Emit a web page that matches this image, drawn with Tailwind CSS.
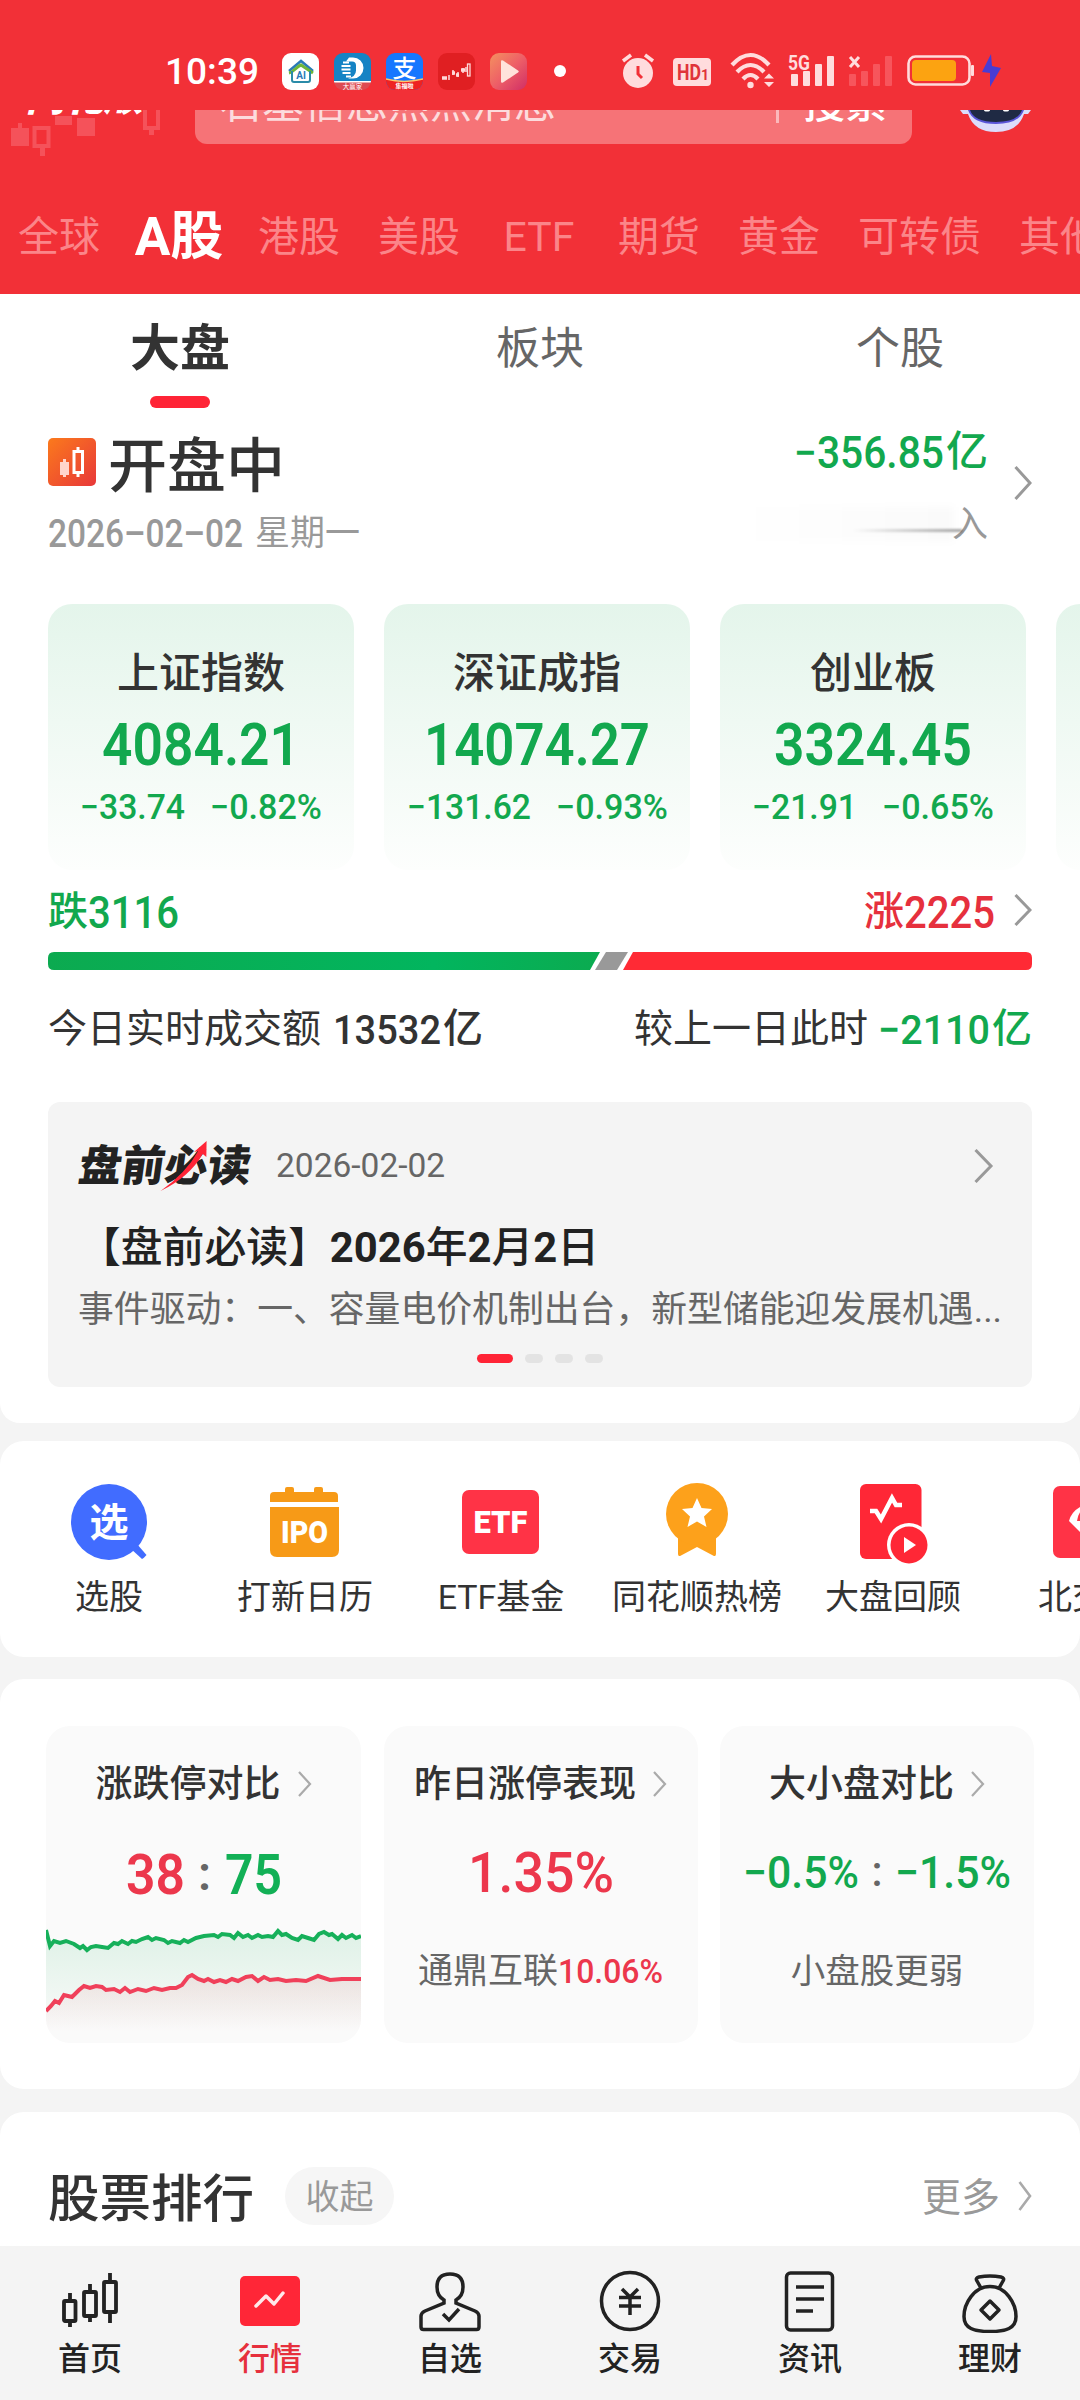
<!DOCTYPE html>
<html lang="zh-CN">
<head>
<meta charset="utf-8">
<title>行情</title>
<script src="https://cdn.jsdelivr.net/npm/@tailwindcss/browser@4"></script>
</head>
<body class="w-[1080px] h-[2400px] overflow-hidden bg-[#f4f4f4] text-[#333] font-['Roboto','Noto_Sans_CJK_SC',sans-serif] flex flex-col whitespace-nowrap">

<!-- status bar -->
<header class="h-[294px] shrink-0 bg-[#f23037] flex flex-col">
  <div class="h-[110px] shrink-0 flex items-center pt-[32px] pl-[165px] relative">
    <svg class="w-[94px] h-[1em] text-[37px] font-medium fill-white overflow-visible"><text y=".845em" textLength="94" lengthAdjust="spacingAndGlyphs">10:39</text></svg>
    <div class="flex gap-[15px] ml-[23px]">
      <svg class="w-[37px] h-[37px]" viewBox="0 0 37 37"><rect width="37" height="37" rx="9" fill="#fff"/><path d="M7 18L19 8l12 10" fill="none" stroke="#2a7ab8" stroke-width="2.5"/><path d="M7 20c5-1 7-6 12-8l12 8" fill="none" stroke="#6db63a" stroke-width="3"/><path d="M10 18v9q0 2 2 2h14q2 0 2-2v-9" fill="none" stroke="#2a8ba8" stroke-width="2"/><text x="19" y="26" font-size="10" font-weight="700" text-anchor="middle" fill="#2a7ab8">AI</text></svg>
      <svg class="w-[37px] h-[37px]" viewBox="0 0 37 37"><defs><clipPath id="r"><rect width="37" height="37" rx="9"/></clipPath></defs><g clip-path="url(#r)"><rect width="37" height="30" fill="#1583c4"/><rect y="29" width="37" height="8" fill="#dd4a52"/><rect y="28" width="37" height="1.5" fill="#fff"/><path d="M15 4.500h4a10.500 10.500 0 0 1 0 21h-5q8-2 8-8v-5q0-4-4-4h-6z" fill="#fff"/><path d="M9 9.500h6M7.500 13h9M7.500 16.500h9M8.500 20h8M12 23.500h5" stroke="#fff" stroke-width="1.900"/><text x="18.500" y="35.500" font-size="6.500" text-anchor="middle" fill="#fff">大赢家</text></g></svg>
      <svg class="w-[37px] h-[37px]" viewBox="0 0 37 37"><g clip-path="url(#r)"><rect width="37" height="37" fill="#1677ff"/><path d="M0 26q18 5 37 0v11H0z" fill="#ee2222"/><path d="M0 26q18 5 37 0" stroke="#ffc46b" stroke-width="1.500" fill="none"/><text x="18.500" y="23.500" font-size="24" font-weight="500" text-anchor="middle" fill="#fff">支</text><text x="18.500" y="35" font-size="6" font-weight="700" text-anchor="middle" fill="#fff">集福啦</text></g></svg>
      <svg class="w-[37px] h-[37px]" viewBox="0 0 37 37"><rect width="37" height="37" rx="9" fill="#e01f22"/><path d="M4 25h5M14 20h3M18 22h3M23 17h4" stroke="#ffdada" stroke-width="3.500"/><path d="M11 22v5M15 17v5M20 19v5M25 15v5M28 14v5" stroke="#ffdada" stroke-width="1.500"/><rect x="29.500" y="11" width="2.500" height="12" fill="none" stroke="#ffdada" stroke-width="1.300"/></svg>
      <svg class="w-[37px] h-[37px]" viewBox="0 0 37 37"><defs><linearGradient id="pl" x1="0" y1="0" x2="1" y2="1"><stop offset="0" stop-color="#f4915f"/><stop offset=".5" stop-color="#ee5f67"/><stop offset="1" stop-color="#d02e66"/></linearGradient></defs><rect width="37" height="37" rx="9" fill="url(#pl)"/><path d="M11 8.500v20q0 2 2 1l15-10q1.500-1 0-2L13 7.500q-2-1-2 1z" fill="#ffe3dc"/></svg>
    </div>
    <div class="w-3 h-3 rounded-full bg-white ml-[27px]"></div>
    <svg class="absolute left-[620px] top-[50px] w-[384px] h-[42px]" viewBox="620 50 384 42" fill="#ffdcdd">
      <circle cx="638" cy="73" r="15"/><path d="M623 61l8-6M653 61l-8-6" stroke="#ffdcdd" stroke-width="3.500"/><path d="M638 66v8l4 4" stroke="#f23037" stroke-width="3" fill="none"/>
      <rect x="673" y="58" width="38" height="28" rx="4"/><text x="689" y="80" font-size="22" font-weight="700" text-anchor="middle" fill="#e0333a" textLength="24" lengthAdjust="spacingAndGlyphs">HD</text><text x="705" y="80" font-size="14" font-weight="700" text-anchor="middle" fill="#e0333a">1</text>
      <g fill="none" stroke="#ffdcdd" stroke-width="4.200"><path d="M732 65q18.500-20 37 0"/><path d="M737 72q13.500-14 27 0"/><path d="M743 79q7.500-8 15 0"/></g><circle cx="750.500" cy="85" r="3.200"/><path d="M764 78.500l5-5 5 5zM764 82l5 5 5-5z"/>
      <text x="788" y="70" font-size="20" font-weight="700" textLength="22" lengthAdjust="spacingAndGlyphs">5G</text>
      <rect x="791" y="74" width="7" height="12" rx="1"/><rect x="803" y="71" width="7" height="15" rx="1"/><rect x="815" y="64" width="7" height="22" rx="1"/><rect x="827" y="56" width="7" height="30" rx="1"/>
      <path d="M850 57l9 10M859 57l-9 10" stroke="#ffdcdd" stroke-width="3"/>
      <g fill="#f7555c"><rect x="849" y="74" width="7" height="12" rx="1"/><rect x="861" y="71" width="7" height="15" rx="1"/><rect x="873" y="64" width="7" height="22" rx="1"/><rect x="885" y="56" width="7" height="30" rx="1"/></g>
      <rect x="908.500" y="56.500" width="61" height="28" rx="7" fill="none" stroke="#ffdcdd" stroke-width="2.600"/><rect x="912" y="60" width="44" height="21" rx="4" fill="#fca311"/><rect x="971" y="65" width="3" height="11" rx="1"/>
      <path d="M991 54l-9 18 8 1v14l11-19-9-2z" fill="#4a3cd2"/>
    </svg>
  </div>
  <!-- partly scrolled search row -->
  <div class="h-[50px] shrink-0 overflow-hidden relative">
    <svg class="absolute left-0 top-0 w-[180px] h-[50px]" viewBox="0 0 180 50"><g fill="#f5525a"><rect x="11" y="18" width="18" height="18"/><rect x="18" y="13" width="4" height="6"/><rect x="55" y="6" width="17" height="9"/><rect x="77" y="8" width="18" height="18"/><rect x="40" y="38" width="5" height="8"/><rect x="149" y="18" width="5" height="7"/></g><g fill="none" stroke="#f5525a" stroke-width="4"><rect x="34.500" y="18" width="14" height="18"/><rect x="145" y="-4" width="13" height="22"/></g></svg>
    <div class="absolute left-[26px] -top-[33px] text-[39px] leading-[42px] font-black italic text-white">同花顺</div>
    <div class="absolute left-[195px] -top-[46px] w-[717px] h-[80px] rounded-[12px] bg-[#f67377] flex items-center pl-[25px] text-[42px] leading-none text-white/75">
      <span>石基信息热点消息</span><span class="w-[3px] h-[38px] bg-white/50 ml-[220px] mr-[24px]"></span><span class="text-white font-medium">搜索</span>
    </div>
    <svg class="absolute left-[955px] top-0 w-[80px] h-[24px]" viewBox="0 0 80 24"><path d="M5 0h71l-3 4h-4q-6 18-28 18T13 4H8z" fill="#dcdcfb"/><path d="M13 0h56q-5 14-28 14T13 0z" fill="#5a55d8"/><path d="M15 0h52q-4 12-26 12T15 0z" fill="#1f2a44"/><ellipse cx="32" cy="0" rx="3" ry="1.500" fill="#fff"/><ellipse cx="51" cy="0" rx="3" ry="1.500" fill="#fff"/></svg>
  </div>
  <nav class="h-[154px] shrink-0 pl-[18px] flex gap-[38px] items-center overflow-hidden text-[41px] leading-none text-[#fb8589] [&>span]:shrink-0">
    <span class="w-[82px]">全球</span><span class="w-[82px] text-[53px] leading-none font-bold text-white flex justify-center">A股</span><span class="w-[82px]">港股</span><span class="w-[82px]">美股</span><span class="w-[82px] text-center">ETF</span><span class="w-[82px]">期货</span><span class="w-[82px]">黄金</span><span class="w-[123px]">可转债</span><span>其他</span>
  </nav>
</header>

<main class="h-[1952px] shrink-0 overflow-hidden flex flex-col">
<section class="h-[1129px] shrink-0 bg-white rounded-b-[20px] flex flex-col">
  <div class="grid grid-cols-3 h-[114px] text-center text-[44px] leading-none text-[#666]">
    <div class="flex flex-col items-center pt-[30px] text-[50px] text-[#333] font-bold"><span>大盘</span><i class="w-[60px] h-3 rounded-full bg-[#ff2436] mt-[22px]"></i></div>
    <div class="pt-[33px]">板块</div><div class="pt-[33px]">个股</div>
  </div>
  <div class="h-[196px] shrink-0 px-12 flex justify-between">
    <div class="pt-[28px] flex flex-col">
      <div class="flex items-center gap-[12px] h-[60px]">
        <svg class="w-12 h-12 -mt-[9px]" viewBox="0 0 48 48"><defs><linearGradient id="kp" x1="0" y1="0" x2="1" y2="1"><stop stop-color="#fb7a1c"/><stop offset="1" stop-color="#e8383a"/></linearGradient></defs><rect width="48" height="48" rx="5" fill="url(#kp)"/><rect x="12" y="24" width="9" height="13" fill="#ffd5cc"/><path d="M16.500 21v18" stroke="#ffd5cc" stroke-width="3"/><rect x="26" y="13.500" width="8.500" height="21" fill="none" stroke="#fff" stroke-width="3"/><path d="M30 9v4M30 35v4" stroke="#fff" stroke-width="3"/></svg>
        <span class="text-[59px] leading-none font-medium">开盘中</span>
      </div>
      <div class="flex items-center h-[40px] mt-[17px] text-[35px] leading-none text-[#999]"><svg class="w-[195px] h-[1em] text-[38px] font-medium fill-current overflow-visible"><text y=".855em" textLength="195" lengthAdjust="spacingAndGlyphs">2026–02–02</text></svg><span class="ml-[12px]">星期一</span></div>
    </div>
    <div class="flex items-start gap-[26px]">
      <div class="flex flex-col items-end pt-[22px]">
        <div class="flex items-center h-[44px] text-[42px] leading-none font-medium text-[#12a84e]"><svg class="w-[150px] h-[1em] text-[44px] fill-current overflow-visible mr-[2px]"><text y=".855em" textLength="150" lengthAdjust="spacingAndGlyphs">−356.85</text></svg>亿</div>
        <div class="flex items-center h-[44px] mt-[29px] text-[36px] leading-none text-[#999] relative">
          <div class="w-[220px] h-[34px] bg-linear-to-r from-transparent to-black/2 blur-[4px] absolute right-[34px] top-[4px]"></div>
          <div class="w-[110px] h-[3px] bg-linear-to-r from-transparent to-black/35 blur-[1px] absolute right-[26px] top-[26px]"></div>
          <span>入</span></div>
      </div>
      <svg class="w-[18px] h-[36px] mt-[57px]" viewBox="0 0 18 36"><path d="M1.500 2L16 18 1.500 34" fill="none" stroke="#999" stroke-width="3"/></svg>
    </div>
  </div>
  <div class="flex gap-[30px] pl-12 overflow-hidden shrink-0 [&>div]:w-[306px] [&>div]:h-[266px] [&>div]:shrink-0 [&>div]:rounded-[24px] [&>div]:bg-linear-to-b [&>div]:from-[#e4f5eb] [&>div]:to-[#fdfefd] [&_svg]:h-[1em] [&_svg]:fill-current [&_svg]:overflow-visible text-[#12a84e]">
    <div class="flex flex-col items-center pt-[49px] leading-none">
      <b class="font-medium text-[42px] text-[#333]">上证指数</b>
      <svg class="w-[198px] text-[60px] font-semibold mt-[19px]"><text y=".855em" textLength="198" lengthAdjust="spacingAndGlyphs">4084.21</text></svg>
      <div class="flex text-[35px] mt-[16px] gap-[25px] font-medium"><svg class="w-[105px]"><text y=".835em" textLength="105" lengthAdjust="spacingAndGlyphs">−33.74</text></svg><svg class="w-[112px]"><text y=".835em" textLength="112" lengthAdjust="spacingAndGlyphs">−0.82%</text></svg></div>
    </div>
    <div class="flex flex-col items-center pt-[49px] leading-none">
      <b class="font-medium text-[42px] text-[#333]">深证成指</b>
      <svg class="w-[226px] text-[60px] font-semibold mt-[19px]"><text y=".855em" textLength="226" lengthAdjust="spacingAndGlyphs">14074.27</text></svg>
      <div class="flex text-[35px] mt-[16px] gap-[25px] font-medium"><svg class="w-[124px]"><text y=".835em" textLength="124" lengthAdjust="spacingAndGlyphs">−131.62</text></svg><svg class="w-[112px]"><text y=".835em" textLength="112" lengthAdjust="spacingAndGlyphs">−0.93%</text></svg></div>
    </div>
    <div class="flex flex-col items-center pt-[49px] leading-none">
      <b class="font-medium text-[42px] text-[#333]">创业板</b>
      <svg class="w-[198px] text-[60px] font-semibold mt-[19px]"><text y=".855em" textLength="198" lengthAdjust="spacingAndGlyphs">3324.45</text></svg>
      <div class="flex text-[35px] mt-[16px] gap-[25px] font-medium"><svg class="w-[105px]"><text y=".835em" textLength="105" lengthAdjust="spacingAndGlyphs">−21.91</text></svg><svg class="w-[112px]"><text y=".835em" textLength="112" lengthAdjust="spacingAndGlyphs">−0.65%</text></svg></div>
    </div>
    <div></div>
  </div>
  <div class="flex items-center justify-between px-12 h-[44px] shrink-0 mt-[20px] text-[40px] leading-none font-medium">
    <div class="flex items-center text-[#12a84e]">跌<svg class="w-[91px] h-[1em] text-[44px] fill-current overflow-visible"><text y=".855em" textLength="91" lengthAdjust="spacingAndGlyphs">3116</text></svg></div>
    <div class="flex items-center text-[#e6303d]">涨<svg class="w-[91px] h-[1em] text-[44px] fill-current overflow-visible"><text y=".855em" textLength="91" lengthAdjust="spacingAndGlyphs">2225</text></svg><svg class="w-[18px] h-[34px] ml-[19px] -mt-[4px]" viewBox="0 0 18 34"><path d="M1.500 2L16 17 1.500 32" fill="none" stroke="#999" stroke-width="3"/></svg></div>
  </div>
  <svg class="mx-12 mt-[18px] w-[984px] h-[18px] shrink-0" viewBox="0 0 984 18"><defs><linearGradient id="g1"><stop stop-color="#0caa50"/><stop offset=".7" stop-color="#02b55e"/><stop offset="1" stop-color="#0bab50"/></linearGradient></defs><path d="M6 0H552L542 18H6Q0 18 0 12V6Q0 0 6 0z" fill="url(#g1)"/><path d="M558 0h22l-11 18h-22z" fill="#999"/><path d="M585 0h393q6 0 6 6v6q0 6-6 6H575z" fill="#ff2a35"/></svg>
  <div class="flex items-center justify-between px-12 h-[44px] shrink-0 mt-[37px] text-[39px] leading-none">
    <div class="flex items-center">今日实时成交额<svg class="w-[108px] h-[1em] text-[41px] font-medium ml-[12px] fill-current overflow-visible"><text y=".855em" textLength="108" lengthAdjust="spacingAndGlyphs">13532</text></svg><b class="font-medium text-[40px] ml-[2px]">亿</b></div>
    <div class="flex items-center">较上一日此时<span class="flex items-center text-[#12a84e] font-medium ml-[10px]"><svg class="w-[112px] h-[1em] text-[41px] fill-current overflow-visible"><text y=".855em" textLength="112" lengthAdjust="spacingAndGlyphs">−2110</text></svg><b class="font-medium text-[40px] ml-[2px]">亿</b></span></div>
  </div>
  <article class="mx-12 mt-[51px] h-[285px] shrink-0 bg-[#f4f4f4] rounded-[12px] px-[31px] pt-[39px] flex flex-col leading-none">
    <div class="flex items-center h-[50px]">
      <div class="relative text-[43px] font-black text-[#222] w-[171px] -skew-x-8">盘前必读<svg class="absolute left-[84px] -top-[4px] w-[44px] h-[52px]" viewBox="0 0 44 52"><path d="M1 50Q24 32 33 10l-4 1L40 0l2 16-4-3Q28 36 1 50z" fill="#ff2436"/></svg></div>
      <span class="text-[33.500px] text-[#666] ml-[26px]">2026-02-02</span>
      <svg class="w-[20px] h-[34px] ml-auto mr-[7px]" viewBox="0 0 20 34"><path d="M1.500 1L17 17 1.500 33" fill="none" stroke="#999" stroke-width="3"/></svg>
    </div>
    <h3 class="text-[41.800px] font-medium text-[#222] mt-[36px]">【盘前必读】<b>2026</b>年<b>2</b>月<b>2</b>日</h3>
    <p class="text-[35.850px] text-[#666] mt-[24px] -ml-px">事件驱动：一、容量电价机制出台，新型储能迎发展机遇...</p>
    <div class="flex justify-center gap-3 mt-[25px] [&>i]:h-[9px] [&>i]:w-[18px] [&>i]:rounded-full [&>i]:bg-[#e3e3e3]"><i class="w-[36px]! bg-[#ff2436]!"></i><i></i><i></i><i></i></div>
  </article>
</section>

<section class="mt-[18px] h-[216px] shrink-0 bg-white rounded-[24px] pl-[11px] pt-[39px] flex overflow-hidden text-[34px] leading-none [&>div]:w-[196px] [&>div]:shrink-0 [&>div]:flex [&>div]:flex-col [&>div]:items-center [&>div]:gap-[20px] [&_svg]:w-[80px] [&_svg]:h-[80px]">
  <div><svg viewBox="0 0 80 80"><circle cx="40" cy="42" r="38" fill="#416cff"/><path d="M61 68l12 11q2-1 4.500-4L68 64z" fill="#416cff"/><text x="40" y="56" font-size="39" font-weight="700" text-anchor="middle" fill="#fff">选</text></svg><span>选股</span></div>
  <div><svg viewBox="0 0 80 80" fill="#f79a17"><path d="M5 22v-6q0-4 4-4h11V9q0-2 2-2h5q2 0 2 2v3h20V9q0-2 2-2h5q2 0 2 2v3h11q4 0 4 4v6z"/><path d="M5 27h69v43q0 7-7 7H12q-7 0-7-7z"/><text x="39.500" y="63" font-size="32" font-weight="900" text-anchor="middle" fill="#fff" textLength="47" lengthAdjust="spacingAndGlyphs">IPO</text></svg><span>打新日历</span></div>
  <div><svg viewBox="0 0 80 80"><rect x="1" y="10" width="77" height="64" rx="7" fill="#ff3346"/><text x="39.500" y="53" font-size="31" font-weight="900" text-anchor="middle" fill="#fff" textLength="54" lengthAdjust="spacingAndGlyphs">ETF</text></svg><span>ETF基金</span></div>
  <div><svg viewBox="0 0 80 80"><path d="M21 56V74q0 3 3 1.500L40 67l16 8.500q3 1.500 3-1.500V56z" fill="#fda11b"/><circle cx="40" cy="34" r="31" fill="#fda11b"/><path d="M40 18l4.500 10 10.500 1-8 7.500 2.500 10.500-9.500-5.500-9.500 5.500L33 36.500 25 29l10.500-1z" fill="#fff"/></svg><span>同花顺热榜</span></div>
  <div><svg viewBox="0 0 80 80" class="overflow-visible"><rect x="7" y="4" width="61.500" height="75" rx="6" fill="#ff2736"/><path d="M17 31h6l5 8 11-21 4 7h6" fill="none" stroke="#fff" stroke-width="4.500"/><circle cx="56" cy="65" r="22" fill="#fff"/><circle cx="56" cy="65" r="18.500" fill="#ff2736"/><path d="M51 57v16l12-8z" fill="#fff"/></svg><span>大盘回顾</span></div>
  <div><svg viewBox="0 0 80 80"><rect x="4" y="6" width="72" height="72" rx="7" fill="#ff3346"/><path d="M46 22Q24 26 20 41l26 26z" fill="#fff"/><path d="M28 41q1-8 6-12v12z" fill="#ff3346"/></svg><span>北交所</span></div>
</section>

<section class="mt-[22px] h-[410px] shrink-0 bg-white rounded-[24px] px-[46px] pt-[47px] grid grid-cols-[315px_314px_314px] gap-[22.500px] items-start leading-none [&>div]:h-[317px] [&>div]:bg-[#fafafa] [&>div]:rounded-[24px] [&>div]:flex [&>div]:flex-col [&>div]:items-center [&>div]:pt-[38px] [&>div]:overflow-hidden">
  <div>
    <div class="flex items-center text-[37px] font-medium h-[40px] shrink-0">涨跌停对比<svg class="w-[14px] h-[26px] ml-[17px]" viewBox="0 0 14 26"><path d="M1 1l11 12L1 25" fill="none" stroke="#aaa" stroke-width="2.200"/></svg></div>
    <div class="flex items-center h-[56px] shrink-0 mt-[42px] text-[56px] font-semibold"><svg class="w-[59px] h-[1em] fill-[#ec374c] overflow-visible"><text y=".855em" textLength="59" lengthAdjust="spacingAndGlyphs">38</text></svg><span class="w-[40px] text-center text-[48px] text-[#666]">:</span><svg class="w-[57px] h-[1em] fill-[#12b056] overflow-visible"><text y=".855em" textLength="57" lengthAdjust="spacingAndGlyphs">75</text></svg></div>
    <svg class="w-[315px] h-[120px] mt-[18px] shrink-0" viewBox="0 0 315 120"><defs><linearGradient id="a1" x1="0" y1="0" x2="0" y2="1"><stop stop-color="#12b056" stop-opacity=".12"/><stop offset="1" stop-color="#12b056" stop-opacity="0"/></linearGradient><linearGradient id="a2" x1="0" y1="0" x2="0" y2="1"><stop stop-color="#ec374c" stop-opacity=".1"/><stop offset="1" stop-color="#ec374c" stop-opacity="0"/></linearGradient></defs>
      <path d="M0 10L4 26 8 21 14 23 20 21 28 24 34 28 41 29 48 26 56 27 62 28 68 23 76 21 82 24 90 21 102 17 110 19 118 20 126 22 134 23 142 20 150 18 158 16 168 15 184 15 188 18 193 14 200 16 210 15 222 17 232 12 242 15 252 19 262 16 270 18 278 12 286 14 296 17 306 15 315 16V110H0z" fill="url(#a1)"/>
      <path d="M0 91L9 81 15 81 20 75 26 76 38 67 56 67 68 71 84 69 92 72 108 69 124 69 136 65 142 57 150 57 158 61 180 61 190 61 206 57 214 61 228 59 240 61 260 60 272 57 284 59 315 59V112H0z" fill="url(#a2)"/>
      <path d="M0 10L4 26 8 21 14 23 20 21 28 24 34 28 37 26 41 30 45 27 50 26 56 27 62 28 68 23 72 24 76 21 82 24 86 21 90 22 96 19 102 17 106 20 110 18 118 20 122 23 126 21 134 23 138 20 142 22 150 18 158 16 168 15 172 17 176 14 184 15 188 18 192 13 197 17 202 15 206 18 212 15 216 17 222 16 227 17 232 11 236 15 240 14 246 18 252 20 256 16 262 18 268 20 273 14 278 12 283 15 286 14 292 19 296 15 300 18 306 15 310 18 315 16" fill="none" stroke="#16b05a" stroke-width="4"/>
      <path d="M0 91L5 86 9 81 13 83 18 75 22 76 26 77 33 70 38 66 44 68 50 66 56 67 60 70 68 69 74 72 79 68 84 72 92 69 100 71 108 68 116 70 124 68 130 68 136 65 142 57 146 55 152 59 158 61 162 59 168 62 174 60 180 62 186 59 192 61 200 57 206 56 212 61 218 57 224 60 232 59 240 61 250 60 260 61 272 56 284 60 296 59 315 59" fill="none" stroke="#f0405a" stroke-width="4"/></svg>
  </div>
  <div>
    <div class="flex items-center text-[37px] font-medium h-[40px]">昨日涨停表现<svg class="w-[14px] h-[26px] ml-[17px]" viewBox="0 0 14 26"><path d="M1 1l11 12L1 25" fill="none" stroke="#aaa" stroke-width="2.200"/></svg></div>
    <div class="flex items-center h-[56px] mt-[40px] text-[55px] font-medium"><svg class="w-[146px] h-[1em] fill-[#ec374c] overflow-visible"><text y=".855em" textLength="146" lengthAdjust="spacingAndGlyphs">1.35%</text></svg></div>
    <div class="flex items-center h-[40px] mt-[51px] text-[35px] text-[#666]">通鼎互联<svg class="w-[105px] h-[1em] text-[34px] font-medium fill-[#ec374c] overflow-visible"><text y=".855em" textLength="105" lengthAdjust="spacingAndGlyphs">10.06%</text></svg></div>
  </div>
  <div>
    <div class="flex items-center text-[37px] font-medium h-[40px]">大小盘对比<svg class="w-[14px] h-[26px] ml-[17px]" viewBox="0 0 14 26"><path d="M1 1l11 12L1 25" fill="none" stroke="#aaa" stroke-width="2.200"/></svg></div>
    <div class="flex items-center h-[56px] mt-[40px] text-[45px] font-medium"><svg class="w-[116px] h-[1em] fill-[#12a84e] overflow-visible"><text y=".855em" textLength="116" lengthAdjust="spacingAndGlyphs">−0.5%</text></svg><span class="w-[36px] text-center text-[42px] text-[#666]">:</span><svg class="w-[116px] h-[1em] fill-[#12a84e] overflow-visible"><text y=".855em" textLength="116" lengthAdjust="spacingAndGlyphs">−1.5%</text></svg></div>
    <div class="flex items-center h-[40px] mt-[51px] text-[34.500px] text-[#666]">小盘股更弱</div>
  </div>
</section>

<section class="mt-[23px] h-[200px] shrink-0 bg-white rounded-t-[24px] px-12 pt-[55px] leading-none">
  <div class="flex items-center h-[57px]">
    <h2 class="text-[51.500px] font-medium pt-[8px]">股票排行</h2>
    <span class="ml-[31px] w-[109px] h-[58px] rounded-full bg-[#f6f6f6] text-[34px] text-[#999] flex items-center justify-center pt-[2px]">收起</span>
    <span class="ml-auto text-[39px] text-[#999] pt-[6px]">更多</span>
    <svg class="w-[14px] h-[30px] ml-[18px]" viewBox="0 0 14 30"><path d="M1.500 1L12 15 1.500 29" fill="none" stroke="#aaa" stroke-width="2.600"/></svg>
  </div>
</section>
</main>

<footer class="h-[154px] shrink-0 bg-[#f4f4f4] grid grid-cols-6 pt-[23px] text-[32px] leading-none font-medium text-[#222] [&>div]:flex [&>div]:flex-col [&>div]:items-center [&>div]:gap-[10px] [&_svg]:w-[64px] [&_svg]:h-[64px]">
  <div><svg viewBox="0 0 64 64" fill="none" stroke="#222" stroke-width="3.800"><rect x="6" y="32" width="11.500" height="20" rx="1"/><path d="M12 33v-9M12 52v6M32 24v-9M32 47v6M52 14V4M52 43v11"/><rect x="26" y="23" width="12" height="24" rx="1"/><rect x="46" y="13" width="12" height="30" rx="1"/></svg><span>首页</span></div>
  <div class="text-[#e6303d]"><svg viewBox="0 0 64 64"><rect x="2" y="7" width="60" height="50" rx="5" fill="#ff2637"/><path d="M18 37l10-10 8 8 9-11" fill="none" stroke="#ffe8ea" stroke-width="3.500" stroke-linecap="round" stroke-linejoin="round"/></svg><span>行情</span></div>
  <div><svg viewBox="0 0 64 64" fill="none" stroke="#222" stroke-width="3.500"><path d="M26 31Q19 27 19 18 19 5 32 5t13 13q0 9-7 13v3l19 8q4 2 4 5v11q0 2.500-2.500 2.500h-53Q3 60.500 3 58V47q0-3 4-5l19-8z"/><path d="M25 45l6 6 10-11"/></svg><span>自选</span></div>
  <div><svg viewBox="0 0 64 64" fill="none" stroke="#222" stroke-width="3.500"><circle cx="32" cy="32" r="28.500"/><path d="M24 20l8 8 8-8M21 28.500h22M21 37h22M32 28v18"/></svg><span>交易</span></div>
  <div><svg viewBox="0 0 64 64" fill="none" stroke="#222" stroke-width="3.500"><rect x="8.500" y="4" width="46" height="57" rx="4"/><path d="M18 18h28M18 30h28M18 42h17"/></svg><span>资讯</span></div>
  <div><svg viewBox="0 0 64 64" fill="none" stroke="#222" stroke-width="3.500" stroke-linejoin="round"><path d="M23 19l-4-7q-2-3 2-4 11-2 22 0 4 1 2 4l-4 7"/><path d="M32 17.500c16 0 26 17 26 30 0 12-10 15-26 15S6 59.500 6 47.500c0-13 10-30 26-30z"/><path d="M32 32l9 9-9 9-9-9z"/></svg><span>理财</span></div>
</footer>
</body>
</html>
